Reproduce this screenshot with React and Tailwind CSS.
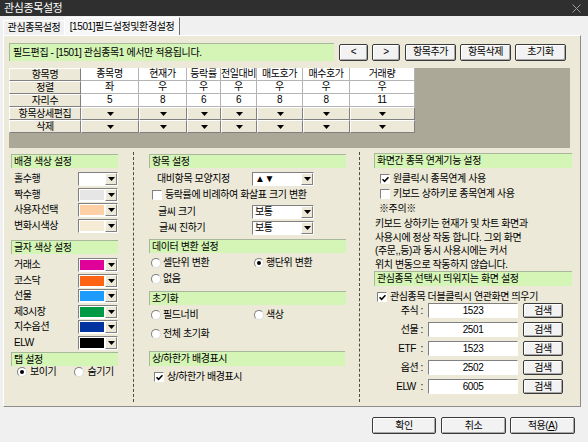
import React from 'react';

const raised = 'border border-t-white border-l-white border-r-[#808080] border-b-[#808080]';
const sunken = 'border border-t-[#808080] border-l-[#808080] border-b-white border-r-white';
const btn = 'border border-[#3a3a3a] rounded-[2px] bg-[#f2f2f2] shadow-[inset_1px_1px_0_#ffffff,inset_-1px_-1px_0_#a8a8a8] flex items-center justify-center leading-none';

const COLS = [
  ['종목명', '좌', '5'],
  ['현재가', '우', '8'],
  ['등락률', '우', '6'],
  ['전일대비', '우', '6'],
  ['매도호가', '우', '8'],
  ['매수호가', '우', '8'],
  ['거래량', '우', '11'],
];

const BG_COLORS = [
  ['홀수행', 'bg-white'],
  ['짝수행', 'bg-[#e6e6e6]'],
  ['사용자선택', 'bg-[#ffcfa6]'],
  ['변화시색상', 'bg-[#f6ecd6]'],
];

const TEXT_COLORS = [
  ['거래소', 'bg-[#e0009a]'],
  ['코스닥', 'bg-[#ff6414]'],
  ['선물', 'bg-[#1e9bff]'],
  ['제3시장', 'bg-[#009a44]'],
  ['지수옵션', 'bg-[#0032a0]'],
  ['ELW', 'bg-black'],
];

const SCREENS = [
  ['주식 :', '1523'],
  ['선물 :', '2501'],
  ['ETF  :', '1523'],
  ['옵션 :', '2502'],
  ['ELW  :', '6005'],
];

const Tri = () => (
  <svg width="7" height="4" viewBox="0 0 7 4" className="block">
    <path d="M0 0H7L3.5 4Z" fill="#000" />
  </svg>
);

const DropBtn = () => (
  <div className={`w-[12px] h-full bg-[#ece9d8] ${raised} flex items-center justify-center`}>
    <Tri />
  </div>
);

const Header = ({ children, className = '' }) => (
  <div className={`bg-[#d4f5b5] border-l border-t border-[#a8b89a] flex items-center pl-[2px] leading-none whitespace-nowrap ${className}`}>
    {children}
  </div>
);

const ColorCombo = ({ color }) => (
  <div className={`w-[40px] h-[14px] flex ${sunken} bg-white`}>
    <div className={`flex-1 m-[1px] ${color}`} />
    <DropBtn />
  </div>
);

const TextCombo = ({ value }) => (
  <div className={`w-[62px] h-[14px] flex ${sunken} bg-white`}>
    <div className="flex-1 flex items-center pl-[2px] leading-none">{value}</div>
    <DropBtn />
  </div>
);

const Radio = ({ checked }) => (
  <span className="w-[10px] h-[10px] shrink-0 rounded-full bg-white border border-t-[#808080] border-l-[#808080] border-b-[#dcdcdc] border-r-[#dcdcdc] flex items-center justify-center">
    {checked && <span className="w-[4px] h-[4px] rounded-full bg-black" />}
  </span>
);

const Check = ({ checked }) => (
  <span className={`w-[10px] h-[10px] shrink-0 bg-white ${sunken} flex items-center justify-center`}>
    {checked && (
      <svg width="7" height="7" viewBox="0 0 7 7" className="block">
        <path d="M0.5 3.2L2.6 5.3L6.5 1.2" stroke="#000" strokeWidth="1.6" fill="none" />
      </svg>
    )}
  </span>
);

const LabelCell = ({ children }) => (
  <div className={`bg-[#ece9d8] ${raised} flex items-center justify-center leading-none whitespace-nowrap`}>{children}</div>
);

const DataCell = ({ children }) => (
  <div className="bg-white border-r border-b border-[#b4b4b4] flex items-center justify-center leading-none whitespace-nowrap overflow-hidden">
    {children}
  </div>
);

const DropCell = () => (
  <div className={`bg-[#ece9d8] ${raised} flex items-center justify-center`}>
    <Tri />
  </div>
);

const Sep = () => <div className="mt-[2px] h-[250px] w-0 border-l border-dashed border-[#4a4a4a]" />;

const App = () => {
  return (
    <div className="w-[588px] h-[442px] overflow-hidden bg-[#f0f0f0] text-[10px] tracking-[-0.4px] text-black font-['Liberation_Sans','Noto_Sans_CJK_KR',sans-serif]">
      {/* 타이틀바 */}
      <div className="h-[16px] bg-[#2f2f2f] flex items-center justify-between pl-[4px] pr-[7px]">
        <span className="text-white leading-none text-[11px]">관심종목설정</span>
        <svg width="9" height="9" viewBox="0 0 9 9" className="block">
          <path d="M0.5 0.5L8.5 8.5M8.5 0.5L0.5 8.5" stroke="#9a9a9a" strokeWidth="1" />
        </svg>
      </div>

      {/* 탭 */}
      <div className="h-[19px] flex items-end pl-[3px]">
        <div className="w-[61px] h-[15px] border-t border-l border-white flex items-center justify-center leading-none">
          관심종목설정
        </div>
        <div className="w-[116px] h-[18px] bg-[#f7f7f7] border-t border-l border-white border-r border-r-[#707070] flex items-center justify-center leading-none">
          [1501]필드설정및환경설정
        </div>
      </div>

      {/* 탭 페이지 */}
      <div className="ml-[3px] w-[578px] h-[372px] bg-[#ece9d8] border border-t-white border-l-white border-r-[#8c8c8c] border-b-[#8c8c8c]">
        {/* 필드편집 바 */}
        <div className="flex items-center pt-[7px] pl-[5px]">
          <Header className="w-[325px] h-[18px] pl-[3px]">필드편집 - [1501] 관심종목1 에서만 적용됩니다.</Header>
          <div className={`ml-[5px] w-[29px] h-[17px] ${btn}`}>&lt;</div>
          <div className={`ml-[4px] w-[28px] h-[17px] ${btn}`}>&gt;</div>
          <div className={`ml-[5px] w-[51px] h-[17px] ${btn}`}>항목추가</div>
          <div className={`ml-[4px] w-[51px] h-[17px] ${btn}`}>항목삭제</div>
          <div className={`ml-[4px] w-[51px] h-[17px] ${btn}`}>초기화</div>
        </div>

        {/* 필드 테이블 */}
        <div className="mt-[7px] ml-[5px] w-[561px] h-[80px] bg-[#aba897]">
          <div className="grid grid-cols-[72px_58px_48px_34px_36px_46px_47px_65px] auto-rows-[13px] w-[406px]">
            <LabelCell>항목명</LabelCell>
            {COLS.map((c) => <DataCell key={c[0]}>{c[0]}</DataCell>)}
            <LabelCell>정렬</LabelCell>
            {COLS.map((c) => <DataCell key={c[0]}>{c[1]}</DataCell>)}
            <LabelCell>자리수</LabelCell>
            {COLS.map((c) => <DataCell key={c[0]}>{c[2]}</DataCell>)}
            <LabelCell>항목상세편집</LabelCell>
            {COLS.map((c) => <DropCell key={c[0]} />)}
            <LabelCell>삭제</LabelCell>
            {COLS.map((c) => <DropCell key={c[0]} />)}
          </div>
        </div>

        {/* 하단 설정 */}
        <div className="mt-[2px] flex">
          {/* 색상 설정 */}
          <div className="ml-[7px] w-[107px] flex flex-col">
            <Header className="mt-[4px] h-[14px]">배경 색상 설정</Header>
            <div className="mt-[4px]">
              {BG_COLORS.map(([label, color]) => (
                <div key={label} className="h-[15.5px] flex items-start">
                  <span className="w-[67px] pl-[3px] h-[14px] flex items-center leading-none">{label}</span>
                  <ColorCombo color={color} />
                </div>
              ))}
            </div>
            <Header className="mt-[6px] h-[14px]">글자 색상 설정</Header>
            <div className="mt-[4px]">
              {TEXT_COLORS.map(([label, color]) => (
                <div key={label} className="h-[15.5px] flex items-start">
                  <span className="w-[67px] pl-[3px] h-[14px] flex items-center leading-none">{label}</span>
                  <ColorCombo color={color} />
                </div>
              ))}
            </div>
            <Header className="mt-[1px] h-[14px]">탭 설정</Header>
            <div className="h-[12px] flex items-center pl-[6px]">
              <Radio checked />
              <span className="ml-[3px] leading-none">보이기</span>
              <span className="ml-[18px]"><Radio /></span>
              <span className="ml-[3px] leading-none">숨기기</span>
            </div>
          </div>

          <div className="ml-[15px]"><Sep /></div>

          {/* 항목 설정 */}
          <div className="ml-[15px] w-[197px] flex flex-col">
            <Header className="mt-[4px] h-[14px]">항목 설정</Header>
            <div className="mt-[4px] h-[14px] flex items-center">
              <span className="w-[103px] pl-[8px] leading-none">대비항목 모양지정</span>
              <TextCombo value="▲▼" />
            </div>
            <div className="mt-[3px] h-[12px] flex items-center pl-[3px]">
              <Check />
              <span className="ml-[3px] leading-none">등락률에 비례하여 화살표 크기 변환</span>
            </div>
            <div className="mt-[4px] h-[14px] flex items-center">
              <span className="w-[103px] pl-[9px] leading-none">글씨 크기</span>
              <TextCombo value="보통" />
            </div>
            <div className="mt-[2px] h-[14px] flex items-center">
              <span className="w-[103px] pl-[10px] leading-none">글씨 진하기</span>
              <TextCombo value="보통" />
            </div>
            <Header className="mt-[4px] h-[14px]">데이터 변환 설정</Header>
            <div className="mt-[4px] h-[12px] flex items-center pl-[2px]">
              <Radio />
              <span className="w-[91px] ml-[2px] leading-none">셀단위 변환</span>
              <Radio checked />
              <span className="ml-[2px] leading-none">행단위 변환</span>
            </div>
            <div className="mt-[4px] h-[12px] flex items-center pl-[2px]">
              <Radio />
              <span className="ml-[2px] leading-none">없음</span>
            </div>
            <Header className="mt-[6px] h-[14px]">초기화</Header>
            <div className="mt-[4px] h-[12px] flex items-center pl-[2px]">
              <Radio />
              <span className="w-[91px] ml-[2px] leading-none">필드너비</span>
              <Radio />
              <span className="ml-[2px] leading-none">색상</span>
            </div>
            <div className="mt-[7px] h-[12px] flex items-center pl-[2px]">
              <Radio />
              <span className="ml-[2px] leading-none">전체 초기화</span>
            </div>
            <Header className="mt-[11px] h-[15px] w-[196px]">상/하한가 배경표시</Header>
            <div className="mt-[5px] h-[12px] flex items-center pl-[5px]">
              <Check checked />
              <span className="ml-[3px] leading-none">상/하한가 배경표시</span>
            </div>
          </div>

          <div className="ml-[13px]"><Sep /></div>

          {/* 화면간 연계 */}
          <div className="ml-[14px] w-[198px] flex flex-col">
            <Header className="mt-[3px] h-[15px]">화면간 종목 연계기능 설정</Header>
            <div className="mt-[5px] h-[12px] flex items-center pl-[6px]">
              <Check checked />
              <span className="ml-[3px] leading-none">원클릭시 종목연계 사용</span>
            </div>
            <div className="mt-[3px] h-[12px] flex items-center pl-[6px]">
              <Check />
              <span className="ml-[3px] leading-none">키보드 상하키로 종목연계 사용</span>
            </div>
            <div className="mt-[2px] h-[14px] flex items-center pl-[5px] leading-none">※주의※</div>
            <div className="mt-[1px] pl-[1px] leading-[13.5px]">
              <div>키보드 상하키는 현재가 및 차트 화면과</div>
              <div>사용시에 정상 작동 합니다. 그외 화면</div>
              <div>(주문,,등)과 동시 사용시에는 커서</div>
              <div>위치 변동으로 작동하지 않습니다.</div>
            </div>
            <Header className="h-[15px]">관심종목 선택시 띄워지는 화면 설정</Header>
            <div className="mt-[5px] h-[12px] flex items-center pl-[3px]">
              <Check checked />
              <span className="ml-[3px] leading-none">관심종목 더블클릭시 연관화면 띄우기</span>
            </div>
            {SCREENS.map(([label, code], i) => (
              <div key={label} className={`h-[15px] flex items-center ${i === 0 ? 'mt-0' : 'mt-[4px]'}`}>
                <span className="w-[49px] text-right leading-none whitespace-pre">{label}</span>
                <div className={`ml-[5px] w-[90px] h-[15px] bg-white ${sunken} flex items-center justify-center leading-none`}>{code}</div>
                <div className={`ml-[5px] w-[40px] h-[15px] ${btn}`}>검색</div>
              </div>
            ))}
          </div>
        </div>
      </div>

      {/* 하단 버튼 */}
      <div className="mt-[10px] flex">
        <div className={`ml-[372px] w-[64px] h-[17px] ${btn}`}>확인</div>
        <div className={`ml-[5px] w-[65px] h-[17px] ${btn}`}>취소</div>
        <div className={`ml-[4px] w-[65px] h-[17px] ${btn}`}>적용(<span className="underline">A</span>)</div>
      </div>
    </div>
  );
};

export default App;
